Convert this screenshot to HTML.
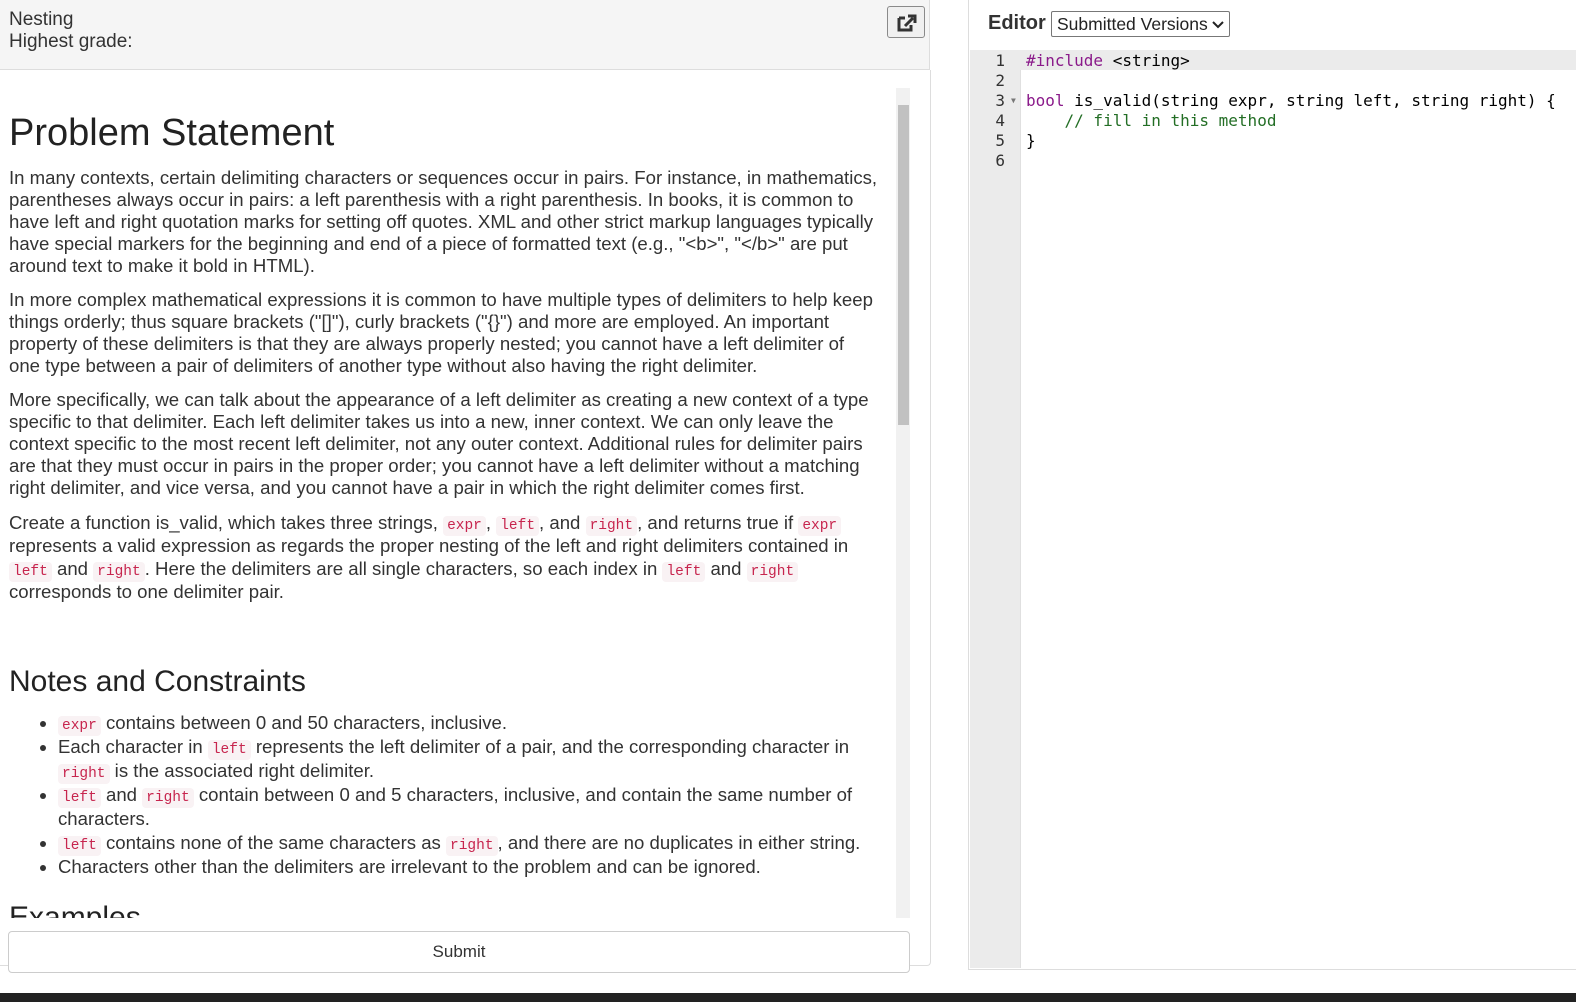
<!DOCTYPE html>
<html><head><meta charset="utf-8"><style>
*{box-sizing:border-box;margin:0;padding:0}
body{width:1576px;height:1002px;background:#fff;font-family:"Liberation Sans",sans-serif;color:#333;position:relative;overflow:hidden}
.hdr{position:absolute;left:0;top:0;width:930px;height:70px;background:#f5f5f5;border-bottom:1px solid #ddd;border-right:1px solid #ddd}
.hdr .t{position:absolute;left:9px;top:9px;font-size:19px;color:#333;line-height:22px}
.btn{position:absolute;left:887px;top:6px;width:38px;height:32px;border:1px solid #8a8a8a;border-radius:3px;background:#f0f0f0}
.lp{position:absolute;left:0;top:70px;width:931px;height:896px;border-right:1px solid #ddd;border-bottom:1px solid #ddd;border-radius:0 0 4px 0}
.content{position:absolute;left:9px;top:88px;width:885px;height:830px;overflow:hidden;font-size:18.6px;line-height:22px;color:#333}
.content p{white-space:nowrap;margin-bottom:12px}
h1{font-weight:normal;font-size:38px;margin-top:25px;margin-bottom:14px;line-height:40px;color:#222}
h2{font-weight:normal;font-size:30px;line-height:34px;color:#222;margin-top:62px;margin-bottom:12px}
code{font-family:"Liberation Mono",monospace;font-size:14.5px;line-height:14px;color:#c7254e;background:#f9f2f4;padding:2px 4px;border-radius:4px}
ul{margin-left:49px}
li{white-space:nowrap;line-height:24px}
.sb{position:absolute;left:896px;top:88px;width:14px;height:830px;background:#f1f1f1}
.thumb{position:absolute;left:898px;top:105px;width:11px;height:320px;background:#c1c1c1}
.sub{position:absolute;left:8px;top:931px;width:902px;height:42px;border:1px solid #ccc;border-radius:4px;background:#fff;text-align:center;line-height:40px;font-size:17px;color:#333}
.ed{position:absolute;left:988px;top:12px;font-size:20px;font-weight:bold;color:#333}
.sel{position:absolute;left:1051px;top:11px;width:179px;height:26px;border:1px solid #777;border-radius:2px;font-size:17.5px;line-height:24px;padding-left:5px;color:#222;white-space:nowrap;overflow:hidden}
.sel svg{position:absolute;right:5px;top:9px}
.rp{position:absolute;left:968px;top:0;width:610px;height:970px;border-left:1px solid #ddd;border-bottom:1px solid #ddd}
.gut{position:absolute;left:970px;top:50px;width:51px;height:918px;background:#ebebeb;border-right:1px solid #e0e0e0}
.l1{position:absolute;left:970px;top:50px;width:606px;height:20px;background:#ebebeb}
.code{position:absolute;left:970px;top:51px;font-family:"DejaVu Sans Mono","Liberation Mono",monospace;font-size:16px;line-height:20px;white-space:pre;color:#000}
.n{display:inline-block;width:35px;text-align:right;color:#333;margin-right:21px;position:relative}
.f{position:absolute;left:41px;top:0;font-size:8px;color:#777}
.k{color:#8a1a8a}.c{color:#236e25}
.bot{position:absolute;left:0;top:993px;width:1576px;height:9px;background:#222}
</style></head><body>
<div class="hdr"><div class="t">Nesting<br>Highest grade:</div>
<div class="btn"><svg width="38" height="32" viewBox="0 0 38 32"><path d="M11 11h6M11 11v12h12v-5" stroke="#333" stroke-width="3" fill="none"/><path d="M17 19l8-8M20 9h7v7" stroke="#333" stroke-width="3" fill="none"/></svg></div></div>
<div class="lp"></div>
<div class="content">
<h1>Problem Statement</h1>
<p>In many contexts, certain delimiting characters or sequences occur in pairs. For instance, in mathematics,<br>parentheses always occur in pairs: a left parenthesis with a right parenthesis. In books, it is common to<br>have left and right quotation marks for setting off quotes. XML and other strict markup languages typically<br>have special markers for the beginning and end of a piece of formatted text (e.g., "&lt;b&gt;", "&lt;/b&gt;" are put<br>around text to make it bold in HTML).</p>
<p>In more complex mathematical expressions it is common to have multiple types of delimiters to help keep<br>things orderly; thus square brackets ("[]"), curly brackets ("{}") and more are employed. An important<br>property of these delimiters is that they are always properly nested; you cannot have a left delimiter of<br>one type between a pair of delimiters of another type without also having the right delimiter.</p>
<p>More specifically, we can talk about the appearance of a left delimiter as creating a new context of a type<br>specific to that delimiter. Each left delimiter takes us into a new, inner context. We can only leave the<br>context specific to the most recent left delimiter, not any outer context. Additional rules for delimiter pairs<br>are that they must occur in pairs in the proper order; you cannot have a left delimiter without a matching<br>right delimiter, and vice versa, and you cannot have a pair in which the right delimiter comes first.</p>
<p style="line-height:23px">Create a function is_valid, which takes three strings, <code>expr</code>, <code>left</code>, and <code>right</code>, and returns true if <code>expr</code><br>represents a valid expression as regards the proper nesting of the left and right delimiters contained in<br><code>left</code> and <code>right</code>. Here the delimiters are all single characters, so each index in <code>left</code> and <code>right</code><br>corresponds to one delimiter pair.</p>
<h2>Notes and Constraints</h2>
<ul>
<li><code>expr</code> contains between 0 and 50 characters, inclusive.</li>
<li>Each character in <code>left</code> represents the left delimiter of a pair, and the corresponding character in<br><code>right</code> is the associated right delimiter.</li>
<li><code>left</code> and <code>right</code> contain between 0 and 5 characters, inclusive, and contain the same number of<br>characters.</li>
<li><code>left</code> contains none of the same characters as <code>right</code>, and there are no duplicates in either string.</li>
<li>Characters other than the delimiters are irrelevant to the problem and can be ignored.</li>
</ul>
<h2 style="margin-top:22px">Examples</h2>
</div>
<div class="sb"></div><div class="thumb"></div>
<div class="sub">Submit</div>
<div class="rp"></div>
<div class="ed">Editor</div>
<div class="sel">Submitted Versions<svg width="12" height="8" viewBox="0 0 12 8"><path d="M1 1l5 5 5-5" stroke="#222" stroke-width="2" fill="none"/></svg></div>
<div class="gut"></div><div class="l1"></div>
<div class="code"><span class="n">1</span><span class="k">#include</span> &lt;string&gt;
<span class="n">2</span>
<span class="n">3<span class="f">▼</span></span><span class="k">bool</span> is_valid(string expr, string left, string right) {
<span class="n">4</span>    <span class="c">// fill in this method</span>
<span class="n">5</span>}
<span class="n">6</span></div>
<div class="bot"></div>
</body></html>
